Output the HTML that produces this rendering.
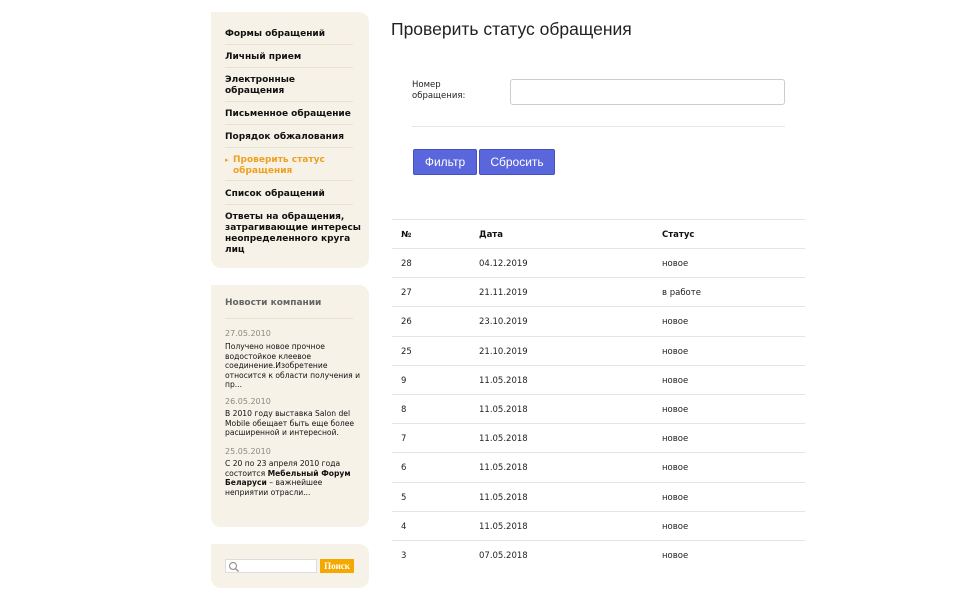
<!DOCTYPE html>
<html><head><meta charset="utf-8"><style>
*{margin:0;padding:0;box-sizing:border-box}
body{width:979px;height:600px;background:#fff;font-family:"DejaVu Sans","Liberation Sans",sans-serif;position:relative;overflow:hidden;color:#111}
.panel{position:absolute;left:211px;width:158px;background:#f6f2e8;border-radius:0 10px 10px 10px}
.menu a{position:absolute;left:14px;width:140px;font-size:9px;font-weight:bold;line-height:11px;color:#111;text-decoration:none;white-space:nowrap;margin-top:1px}
.sep{position:absolute;left:14px;width:128px;height:1px;background:#e8e2d2}
.news{position:absolute;left:14px;width:140px;font-size:7.6px;line-height:9.6px;color:#111}
.d{color:#8a8a80;font-size:8px}
h1{position:absolute;left:391px;top:19px;font-family:"Liberation Sans",sans-serif;font-weight:normal;font-size:17.5px;color:#222}
.btn{position:absolute;top:149px;height:26px;background:#5a66dc;border:1px solid #4650c0;border-radius:2px;color:#fff;font-family:"Liberation Sans",sans-serif;font-size:12px;line-height:24px;text-align:center}
table{position:absolute;left:392px;top:219px;width:413px;border-collapse:collapse;font-size:8.5px}
td{height:29.2px;border-top:1px solid #e4e4e4;padding-left:9px;padding-top:2px;color:#222}
tr:last-child td{border-bottom:none}
th{height:29px;border-top:1px solid #e4e4e4;text-align:left;padding-left:9px;padding-top:2px;font-weight:bold}
</style></head><body>
<div class="panel menu" style="top:12px;height:256px">
<a style="top:16px">Формы обращений</a><div class="sep" style="top:32px"></div>
<a style="top:39px">Личный прием</a><div class="sep" style="top:55px"></div>
<a style="top:62px">Электронные<br>обращения</a><div class="sep" style="top:89px"></div>
<a style="top:96px">Письменное обращение</a><div class="sep" style="top:112px"></div>
<a style="top:119px">Порядок обжалования</a><div class="sep" style="top:135px"></div>
<a style="top:142px;left:22px;color:#f0a020">Проверить статус<br>обращения</a><span style="position:absolute;left:14px;top:144px;font-size:7px;color:#f0a020">▸</span><div class="sep" style="top:168px"></div>
<a style="top:176px">Список обращений</a><div class="sep" style="top:192px"></div>
<a style="top:199px">Ответы на обращения,<br>затрагивающие интересы<br>неопределенного круга<br>лиц</a>
</div>
<div class="panel" style="top:285px;height:242px">
<div class="news" style="top:14px;font-weight:bold;color:#666;font-size:9px">Новости компании</div>
<div class="sep" style="top:33px"></div>
<div class="news d" style="top:44px">27.05.2010</div>
<div class="news" style="top:57px">Получено новое прочное<br>водостойкое клеевое<br>соединение.Изобретение<br>относится к области получения и<br>пр...</div>
<div class="news d" style="top:112px">26.05.2010</div>
<div class="news" style="top:124px">В 2010 году выставка Salon del<br>Mobile обещает быть еще более<br>расширенной и интересной.</div>
<div class="news d" style="top:162px">25.05.2010</div>
<div class="news" style="top:174px">С 20 по 23 апреля 2010 года<br>состоится <b>Мебельный Форум<br>Беларуси</b> – важнейшее<br>неприятии отрасли...</div>
</div>
<div class="panel" style="top:544px;height:44px">
<div style="position:absolute;left:14px;top:15px;width:92px;height:14px;background:#fff;border:1px solid #ddd"><svg width="12" height="12" style="position:absolute;left:2px;top:1px"><circle cx="5" cy="5" r="3.5" fill="none" stroke="#999" stroke-width="1.2"/><line x1="7.5" y1="7.5" x2="10.5" y2="10.5" stroke="#999" stroke-width="1.5"/></svg></div>
<div style="position:absolute;left:109px;top:15px;width:34px;height:14px;background:#f5a800;color:#fff;font-family:'Liberation Serif',serif;font-size:9px;line-height:14px;text-align:center;font-weight:bold">Поиск</div>
</div>
<h1>Проверить статус обращения</h1>
<div style="position:absolute;left:412px;top:80px;font-size:8.5px;line-height:11px;color:#222">Номер<br>обращения:</div>
<div style="position:absolute;left:510px;top:79px;width:275px;height:26px;border:1px solid #ccc;border-radius:3px"></div>
<div style="position:absolute;left:412px;top:126px;width:373px;height:1px;background:#e6e6e6"></div>
<div class="btn" style="left:413px;width:64px">Фильтр</div>
<div class="btn" style="left:479px;width:76px">Сбросить</div>
<table>
<tr><th style="width:78px">№</th><th style="width:183px">Дата</th><th>Статус</th></tr>
<tr><td>28</td><td>04.12.2019</td><td>новое</td></tr>
<tr><td>27</td><td>21.11.2019</td><td>в работе</td></tr>
<tr><td>26</td><td>23.10.2019</td><td>новое</td></tr>
<tr><td>25</td><td>21.10.2019</td><td>новое</td></tr>
<tr><td>9</td><td>11.05.2018</td><td>новое</td></tr>
<tr><td>8</td><td>11.05.2018</td><td>новое</td></tr>
<tr><td>7</td><td>11.05.2018</td><td>новое</td></tr>
<tr><td>6</td><td>11.05.2018</td><td>новое</td></tr>
<tr><td>5</td><td>11.05.2018</td><td>новое</td></tr>
<tr><td>4</td><td>11.05.2018</td><td>новое</td></tr>
<tr><td>3</td><td>07.05.2018</td><td>новое</td></tr>
</table>
</body></html>
